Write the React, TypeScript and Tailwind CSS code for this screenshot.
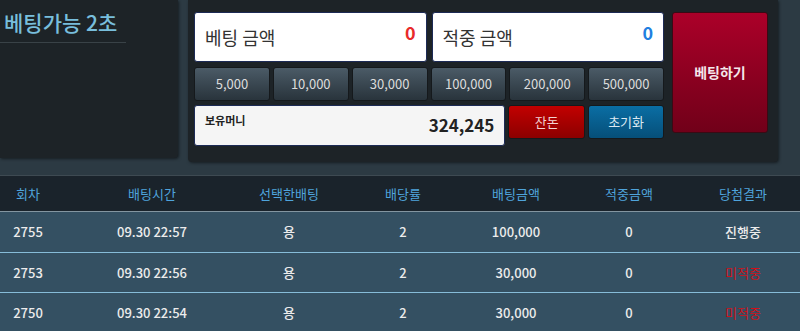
import React from "react";

const chips = ["5,000", "10,000", "30,000", "100,000", "200,000", "500,000"];

const rows = [
  { round: "2755", time: "09.30 22:57", pick: "용", odds: "2", amount: "100,000", win: "0", result: "진행중", lost: false },
  { round: "2753", time: "09.30 22:56", pick: "용", odds: "2", amount: "30,000", win: "0", result: "미적중", lost: true },
  { round: "2750", time: "09.30 22:54", pick: "용", odds: "2", amount: "30,000", win: "0", result: "미적중", lost: true },
];

const headers = ["회차", "배팅시간", "선택한배팅", "배당률", "배팅금액", "적중금액", "당첨결과"];

const cols = "grid grid-cols-[56px_192px_82px_146px_80px_146px_82px]";

export default function App() {
  return (
    <div
      className="w-[800px] h-[331px] overflow-hidden bg-[#2c3a43]"
      style={{ fontFamily: '"Noto Sans CJK KR", "Noto Sans", sans-serif' }}
    >
      <div className="flex h-[175px]">
        {/* countdown panel */}
        <div className="w-[178px] h-[158px] bg-[#1d2327] rounded-br-[4px] shadow-[1px_1px_3px_rgba(0,0,0,0.5)]">
          <div className="pl-[4px] pt-[8px] text-[21px] font-medium leading-[28px] text-[#78bedc]">
            베팅가능 2초
          </div>
          <div className="mt-[6px] w-[126px] h-px bg-[#394247]" />
        </div>

        {/* bet panel */}
        <div className="ml-[10px] w-[590px] h-[162px] bg-[#1d2327] rounded-b-[4px] px-[6px] pt-[12px] flex gap-[8px] shadow-[1px_1px_3px_rgba(0,0,0,0.5)]">
          <div className="w-[470px] flex flex-col">
            <div className="flex gap-[5px]">
              <div className="flex-1 h-[50px] bg-white rounded-[3px] border border-[#1c2a55] flex justify-between px-[10px]">
                <span className="text-[18px] text-[#333] leading-[48px]">베팅 금액</span>
                <span className="text-[18px] font-bold text-[#e82a2a] leading-[38px]">0</span>
              </div>
              <div className="flex-1 h-[50px] bg-white rounded-[3px] border border-[#1c2a55] flex justify-between px-[10px]">
                <span className="text-[18px] text-[#333] leading-[48px]">적중 금액</span>
                <span className="text-[18px] font-bold text-[#1f7fe0] leading-[38px]">0</span>
              </div>
            </div>
            <div className="mt-[5px] grid grid-cols-6 gap-[3px]">
              {chips.map((c) => (
                <div
                  key={c}
                  className="h-[34px] rounded-[3px] border border-[#15191c] bg-gradient-to-b from-[#4b5b67] to-[#29343c] text-[13px] text-[#dcdcdc] flex items-center justify-center"
                >
                  {c}
                </div>
              ))}
            </div>
            <div className="mt-[4px] flex gap-[3px]">
              <div className="w-[312px] h-[41px] bg-[#f5f5f5] rounded-[3px] border border-[#1c2a55] flex justify-between px-[10px]">
                <span className="text-[11px] font-bold text-[#222] leading-[28px]">보유머니</span>
                <span className="text-[17px] font-bold text-[#222] leading-[38px]">324,245</span>
              </div>
              <div className="w-[77px] h-[34px] rounded-[3px] border border-[#15191c] bg-gradient-to-b from-[#c20000] to-[#8c0000] text-[13px] text-[#f3d2d2] flex items-center justify-center">
                잔돈
              </div>
              <div className="w-[76px] h-[34px] rounded-[3px] border border-[#15191c] bg-gradient-to-b from-[#0a6ea4] to-[#064f79] text-[13px] text-[#dbe9f2] flex items-center justify-center">
                초기화
              </div>
            </div>
          </div>
          <div className="w-[96px] h-[121px] rounded-[3px] border border-[#3a0a14] bg-gradient-to-b from-[#ab0029] to-[#710019] text-[14px] font-bold text-[#f4e6ea] flex items-center justify-center">
            베팅하기
          </div>
        </div>
      </div>

      {/* history table */}
      <div className={`${cols} h-[36px] bg-[#1a232b] border-t border-[#3e4a52] items-center text-[13px] text-[#4fa4dc]`}>
        {headers.map((h) => (
          <div key={h} className="text-center">{h}</div>
        ))}
      </div>
      <div className="border-t border-[#8395a0]">
        {rows.map((r, i) => (
          <div
            key={r.round}
            className={`${cols} h-[40px] bg-[#345062] items-center text-[13px] text-[#ececec] font-medium ${i > 0 ? "border-t border-[#86bcd8]" : ""}`}
          >
            <div className="text-center">{r.round}</div>
            <div className="text-center">{r.time}</div>
            <div className="text-center">{r.pick}</div>
            <div className="text-center">{r.odds}</div>
            <div className="text-center">{r.amount}</div>
            <div className="text-center">{r.win}</div>
            <div className={`text-center ${r.lost ? "text-[#d0101a] font-normal" : ""}`}>{r.result}</div>
          </div>
        ))}
      </div>
    </div>
  );
}
